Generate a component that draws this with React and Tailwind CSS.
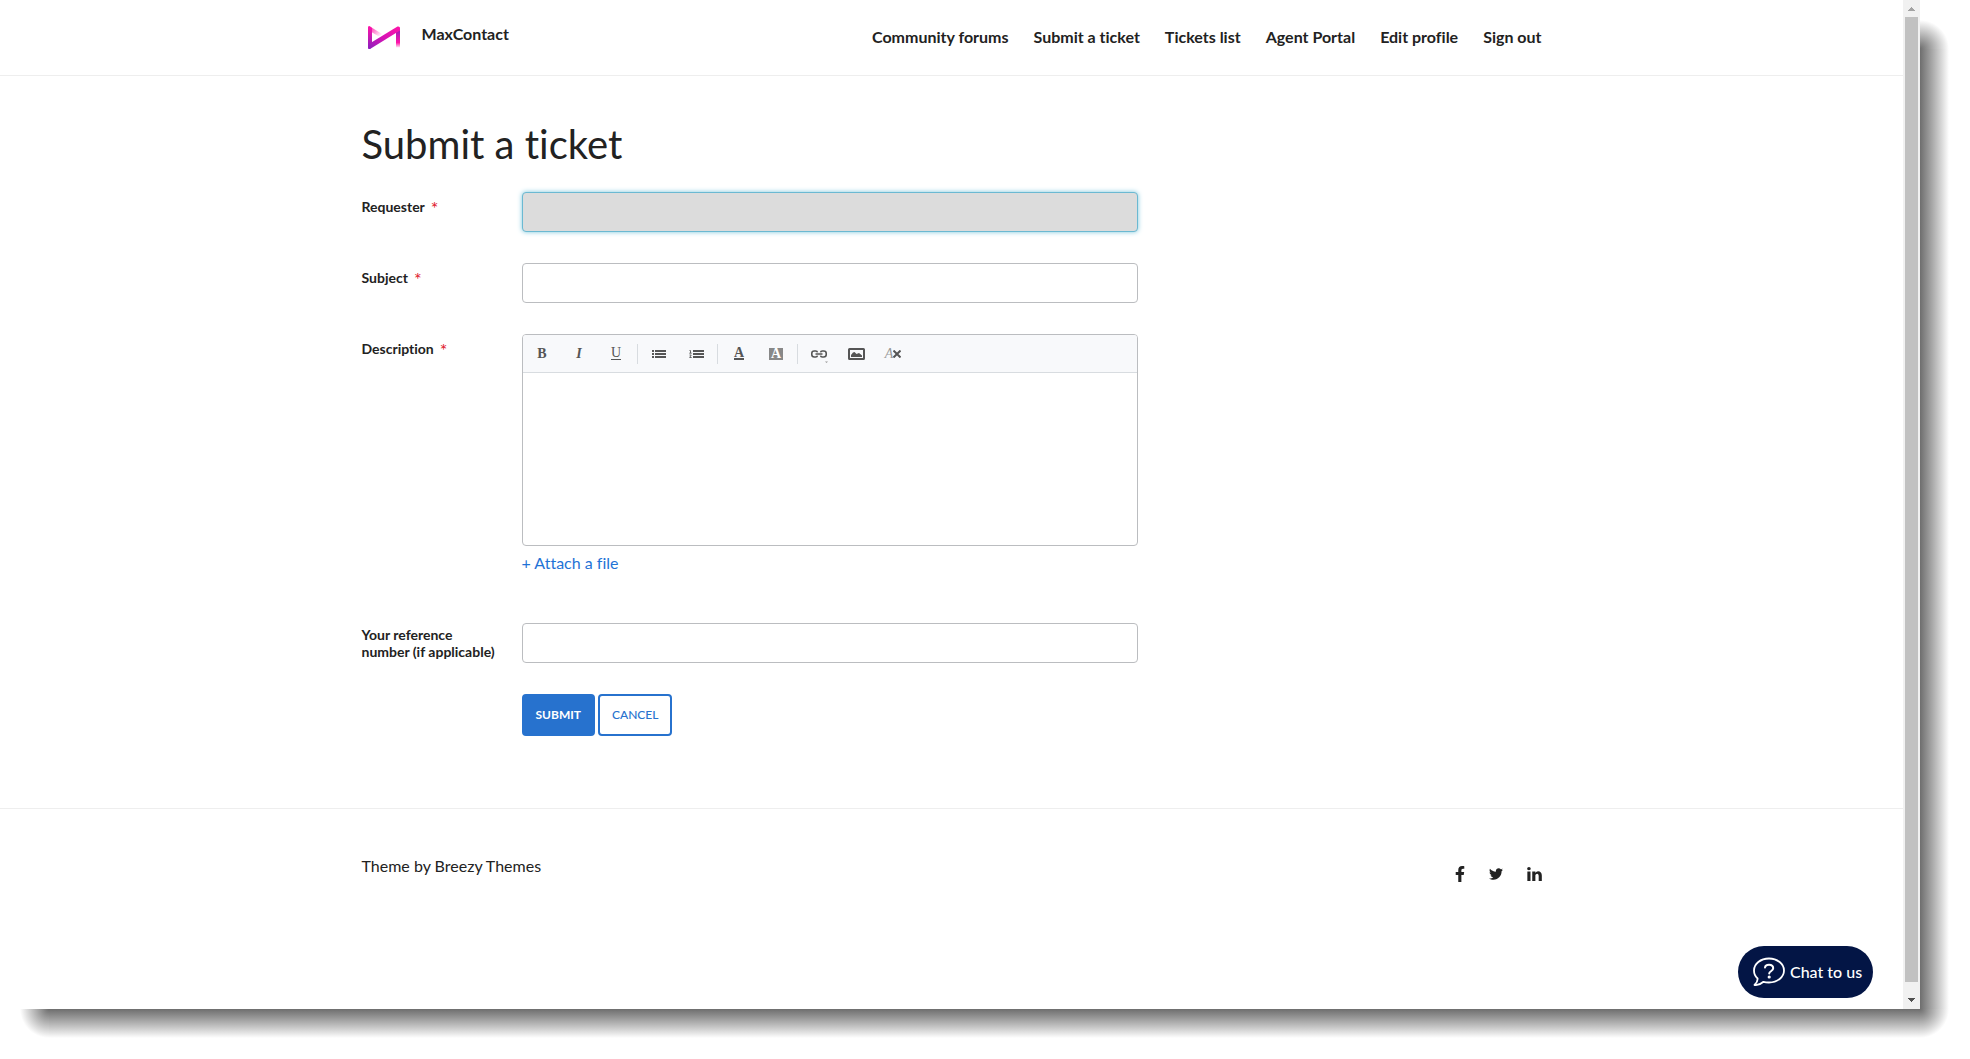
import React, { useState } from "react";
import { FaFacebookF, FaTwitter } from "react-icons/fa";

const navLinks = [
  "Community forums",
  "Submit a ticket",
  "Tickets list",
  "Agent Portal",
  "Edit profile",
  "Sign out",
];

const Logo = () => (
  <svg className="h-6 w-8" viewBox="0 0 32 24" fill="none">
    <defs>
      <linearGradient id="logoLeft" x1="0" y1="0" x2="0" y2="1">
        <stop offset="0" stopColor="#ff14a8" />
        <stop offset="1" stopColor="#8a1fbd" />
      </linearGradient>
      <linearGradient id="logoDiagonal" x1="0" y1="1" x2="1" y2="0">
        <stop offset="0" stopColor="#8a1fbd" />
        <stop offset="0.5" stopColor="#d812b4" />
        <stop offset="1" stopColor="#ff14a8" />
      </linearGradient>
      <linearGradient id="logoFade" x1="0" y1="0" x2="1" y2="0.6">
        <stop offset="0" stopColor="#ff14a8" />
        <stop offset="1" stopColor="#ff14a8" stopOpacity="0.1" />
      </linearGradient>
      <linearGradient id="logoRight" x1="0" y1="0" x2="0" y2="1">
        <stop offset="0" stopColor="#8a1fbd" />
        <stop offset="0.75" stopColor="#ff14a8" />
        <stop offset="1" stopColor="#ff14a8" stopOpacity="0.1" />
      </linearGradient>
    </defs>
    <path d="M0 1.500C0 0.500 1 0 2 0.400L14 8L11 10.500L0 4Z" fill="url(#logoFade)" />
    <path d="M28 4L32 2V21.500H28Z" fill="url(#logoRight)" />
    <path d="M0 2Q0 0 2 0.400L4 2V20L2 23H1Q0 23 0 21.500Z" fill="url(#logoLeft)" />
    <path d="M0 18.500L29.500 0.500Q32 0 32 2V4.500L2 23Q0 23 0 21Z" fill="url(#logoDiagonal)" />
  </svg>
);

const LinkedinIcon = () => (
  <svg className="h-[14px] w-[15px]" viewBox="0 148 1536 1468" fill="currentColor">
    <path d="M349 625v991H19V625h330zm21-306q1 73-50.500 122T184 490h-2q-82 0-132-49T0 319q0-74 51.500-122.500T186 148t133 48.500T370 319zm1166 729v568h-329v-530q0-105-40.500-164.500T1040 862q-63 0-105.500 34.500T871 982q-11 30-11 81v553H531q2-399 2-647t-1-296l-1-48h329v144h-2q20-32 41-56t56.500-52 87-43.500T1157 602q171 0 275 113.500t104 332.500z" />
  </svg>
);

const Separator = () => <span className="ml-[2px] mr-[3px] h-5 w-px bg-[#d8dce0]" />;

const ToolButton = ({ label, children }) => (
  <button
    type="button"
    aria-label={label}
    className="flex h-9 w-[37px] items-center justify-center font-['Liberation_Serif',serif] text-sm leading-4 text-[#555]"
  >
    {children}
  </button>
);

const Toolbar = () => (
  <div className="flex h-[38px] items-center border-b border-[#d8dce0] bg-[#f8f9fb] pl-px">
    <ToolButton label="Bold">
      <span className="font-bold">B</span>
    </ToolButton>
    <ToolButton label="Italic">
      <span className="font-bold italic">I</span>
    </ToolButton>
    <ToolButton label="Underline">
      <span className="border-b border-[#555] leading-3">U</span>
    </ToolButton>
    <Separator />
    <ToolButton label="Bulleted list">
      <svg className="h-2 w-3.5" viewBox="0 0 14 8" fill="currentColor">
        <path d="M0 0h2v2H0zM3 0h11v2H3zM0 3h2v2H0zM3 3h11v2H3zM0 6h2v2H0zM3 6h11v2H3z" />
      </svg>
    </ToolButton>
    <ToolButton label="Numbered list">
      <svg className="h-2 w-[15px]" viewBox="0 0 15 8" fill="currentColor">
        <path d="M4 0h11v2H4zM4 3h11v2H4zM4 6h11v2H4z" />
        <path
          d="M0.500 0.500H1.500V3M0.300 3.200H2.700M0.500 5H2.200L0.700 7.500H2.700"
          fill="none"
          stroke="currentColor"
          strokeWidth="0.900"
        />
      </svg>
    </ToolButton>
    <Separator />
    <ToolButton label="Text color">
      <span className="border-b-2 border-[#555] font-bold leading-[10px]">A</span>
    </ToolButton>
    <ToolButton label="Highlight">
      <span className="h-3 w-3.5 bg-[#888] font-bold leading-3 text-white">A</span>
    </ToolButton>
    <Separator />
    <ToolButton label="Link">
      <svg
        className="h-4 w-4 overflow-visible"
        viewBox="0 0 16 16"
        fill="none"
        stroke="currentColor"
        strokeWidth="1.600"
      >
        <path d="M6.500 6.300C6.300 5.400 5.500 5 4.700 5H3.300C1.800 5 0.800 5.900 0.800 7.200V8.800C0.800 10.100 1.800 11 3.300 11H4.700C5.500 11 6.300 10.600 6.500 9.700M9.500 6.300C9.700 5.400 10.500 5 11.300 5H12.700C14.200 5 15.200 5.900 15.200 7.200V8.800C15.200 10.100 14.200 11 12.700 11H11.300C10.500 11 9.700 10.600 9.500 9.700M4.500 8H11.500" />
        <path d="M14 15.500h3l-1.500 1.500z" fill="#999" stroke="none" />
      </svg>
    </ToolButton>
    <ToolButton label="Insert image">
      <svg className="h-3 w-[17px]" viewBox="0 0 17 12">
        <rect x="1" y="1" width="15" height="10" rx="0.500" fill="none" stroke="currentColor" strokeWidth="2" />
        <path d="M3 9V7L5 4.500L6.500 4L8.500 6L11 5L14 7.500V9Z" fill="currentColor" />
      </svg>
    </ToolButton>
    <ToolButton label="Remove format">
      <span className="italic text-[#999]">A</span>
      <svg className="h-2 w-2" viewBox="0 0 8 8" stroke="currentColor" strokeWidth="2">
        <path d="M0.500 0.500L7.500 7.500M7.500 0.500L0.500 7.500" />
      </svg>
    </ToolButton>
  </div>
);

const Field = ({ id, label, required, children }) => (
  <div className="flex">
    <label htmlFor={id} className="w-40 shrink-0 pr-5 pt-[3px] text-sm leading-[17px] font-bold">
      {label}
      {required && (
        <span className="ml-1.5 align-[-3px] text-lg leading-[26px] font-normal text-[#e0182d]">*</span>
      )}
    </label>
    <div className="min-w-0 flex-1">{children}</div>
  </div>
);

const Scrollbar = () => (
  <div className="flex w-[17px] shrink-0 flex-col items-center bg-[#f1f1f1]">
    <svg className="h-[17px] w-[17px] shrink-0" viewBox="0 0 17 17">
      <path d="M8 7h1v1h1v1h1v1h1v1H5v-1h1V9h1V8h1z" fill="#a3a3a3" />
    </svg>
    <div className="w-[13px] flex-1 bg-[#c1c1c1]" />
    <svg className="h-[27px] w-[17px] shrink-0" viewBox="0 0 17 27">
      <path d="M5 16h7v1h-1v1h-1v1H9v1H8v-1H7v-1H6v-1H5z" fill="#505050" />
    </svg>
  </div>
);

export default function App() {
  const [subject, setSubject] = useState("");
  const [description, setDescription] = useState("");
  const [reference, setReference] = useState("");

  const inputClass =
    "block h-10 w-full rounded-[4px] border border-[#bbbdc0] bg-white px-3 text-base outline-none";

  return (
    <div className="grid h-screen grid-cols-[minmax(0,1fr)_50px] grid-rows-[minmax(0,1fr)_50px] bg-white font-['Lato',sans-serif] text-base text-[#222] [font-variant-ligatures:no-common-ligatures]">
      {/* Browser page */}
      <div className="relative flex bg-white">
        <div className="min-w-0 flex-1">
          <header className="border-b border-[#eee]">
            <div className="mx-auto flex h-[75px] max-w-[1180px] items-center justify-between">
              <a href="#" className="flex items-center gap-[22px] pl-1.5 font-bold">
                <Logo />
                <span className="pb-2">MaxContact</span>
              </a>
              <nav className="flex gap-[25px] pb-0.5">
                {navLinks.map((link) => (
                  <a href="#" key={link} className="font-bold">
                    {link}
                  </a>
                ))}
              </nav>
            </div>
          </header>

          <main className="mx-auto max-w-[1180px] pb-[72px] pt-11">
            <h1 className="mb-6 text-[40px] leading-12">Submit a ticket</h1>

            <form
              onSubmit={(e) => e.preventDefault()}
              className="flex max-w-[776px] flex-col gap-[31px]"
            >
              <Field id="requester" label="Requester" required>
                <input
                  id="requester"
                  type="text"
                  readOnly
                  className="block h-10 w-full rounded-[4px] border border-[#6bb9d2] bg-[#dcdcdc] px-3 shadow-[0_0_5px_#7cc6dc] outline-none"
                />
              </Field>

              <Field id="subject" label="Subject" required>
                <input
                  id="subject"
                  type="text"
                  value={subject}
                  onChange={(e) => setSubject(e.target.value)}
                  className={inputClass}
                />
              </Field>

              <Field id="description" label="Description" required>
                <div className="overflow-hidden rounded-[4px] border border-[#bbbdc0]">
                  <Toolbar />
                  <textarea
                    id="description"
                    value={description}
                    onChange={(e) => setDescription(e.target.value)}
                    className="block h-[172px] w-full resize-none p-3 outline-none"
                  />
                </div>
                <a href="#" className="mb-[17px] mt-[5px] block text-[#1f73d6]">
                  + Attach a file
                </a>
              </Field>

              <Field id="reference" label="Your reference number (if applicable)">
                <input
                  id="reference"
                  type="text"
                  value={reference}
                  onChange={(e) => setReference(e.target.value)}
                  className={inputClass}
                />
              </Field>

              <div className="flex gap-[3px] pl-40 text-xs">
                <button
                  type="submit"
                  className="h-[42px] rounded-[4px] border-2 border-[#2772ce] bg-[#2772ce] px-3 font-bold text-white"
                >
                  SUBMIT
                </button>
                <button
                  type="button"
                  className="h-[42px] rounded-[4px] border-2 border-[#2772ce] px-3 font-medium text-[#2772ce]"
                >
                  CANCEL
                </button>
              </div>
            </form>
          </main>

          <footer className="border-t border-[#eee]">
            <div className="mx-auto flex max-w-[1180px] items-start justify-between pt-[45px]">
              <p>Theme by Breezy Themes</p>
              <div className="flex items-center gap-6 pt-3">
                <a href="#" aria-label="Facebook">
                  <FaFacebookF className="h-4 w-[10px]" />
                </a>
                <a href="#" aria-label="Twitter">
                  <FaTwitter className="h-4 w-[14px]" />
                </a>
                <a href="#" aria-label="LinkedIn">
                  <LinkedinIcon />
                </a>
              </div>
            </div>
          </footer>
        </div>

        <Scrollbar />

        {/* Chat widget */}
        <button
          type="button"
          className="absolute bottom-[11px] right-[47px] flex h-13 w-[135px] items-center gap-[5px] rounded-full bg-[#031545] pl-[15px] text-base font-medium text-white"
        >
          <svg
            className="h-8 w-8 shrink-0"
            viewBox="0 0 32 32"
            fill="none"
            stroke="white"
            strokeWidth="1.800"
            strokeLinecap="round"
            strokeLinejoin="round"
          >
            <path d="M16 2.500C24.500 2.500 31 8 31 14.500S24.500 26.500 16 26.500C14 26.500 12 26.300 10.500 25.800C8 28 4.500 29.500 1.500 29C3.500 27 4.800 25 4.600 22.500C2.300 20.500 1 17.900 1 14.500C1 8 7.500 2.500 16 2.500Z" />
            <path d="M12 11.500C12.200 9.600 13.800 8.700 16 8.700C18.500 8.700 20.200 10 20.200 12.200C20.200 15.200 16.200 15.300 16.200 17.600" strokeWidth="2" />
            <circle cx="16.200" cy="21" r="0.700" fill="white" />
          </svg>
          Chat to us
        </button>
      </div>

      {/* Right shadow */}
      <div className="flex w-[29px] flex-col pt-5">
        <div className="h-[29px] bg-[radial-gradient(circle_29px_at_0_100%,#6e6e6e,#fff)]" />
        <div className="flex-1 bg-linear-to-r from-[#6e6e6e] to-white" />
      </div>

      {/* Bottom shadow */}
      <div className="flex h-[29px] pl-5">
        <div className="w-[29px] bg-[radial-gradient(circle_29px_at_100%_0,#6e6e6e,#fff)]" />
        <div className="flex-1 bg-linear-to-b from-[#6e6e6e] to-white" />
      </div>
      <div className="h-[29px] w-[29px] bg-[radial-gradient(circle_29px_at_0_0,#6e6e6e,#fff)]" />
    </div>
  );
}
